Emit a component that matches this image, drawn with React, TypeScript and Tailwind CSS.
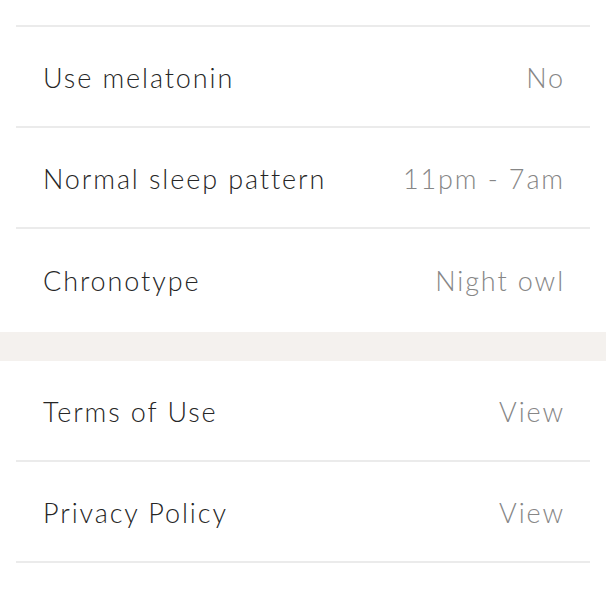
import React from "react";

const Row = ({ label, value, border = true }: { label: string; value: string; border?: boolean }) => (
  <div className={`mx-4 flex items-center justify-between pl-[27px] pr-[25px] pt-[3px] h-[101px] ${border ? "border-b-2 border-[#ebebeb]" : ""}`}>
    <span className="text-[27px] font-light tracking-[1.9px] text-[#262626]">{label}</span>
    <span className="text-[27px] font-light tracking-[1.9px] text-[#868686]">{value}</span>
  </div>
);

export default function App() {
  return (
    <div className="w-[606px] h-[600px] overflow-hidden bg-white" style={{ fontFamily: "Lato, 'Open Sans', sans-serif" }}>
      <div className="mx-4 h-[27px] border-b-2 border-[#ebebeb]" />
      <Row label="Use melatonin" value="No" />
      <Row label="Normal sleep pattern" value="11pm - 7am" />
      <div className="h-[103px]">
        <Row label="Chronotype" value="Night owl" border={false} />
      </div>
      <div className="h-[29px] bg-[#f4f1ee]" />
      <Row label="Terms of Use" value="View" />
      <Row label="Privacy Policy" value="View" />
      <Row label="" value="" />
    </div>
  );
}
